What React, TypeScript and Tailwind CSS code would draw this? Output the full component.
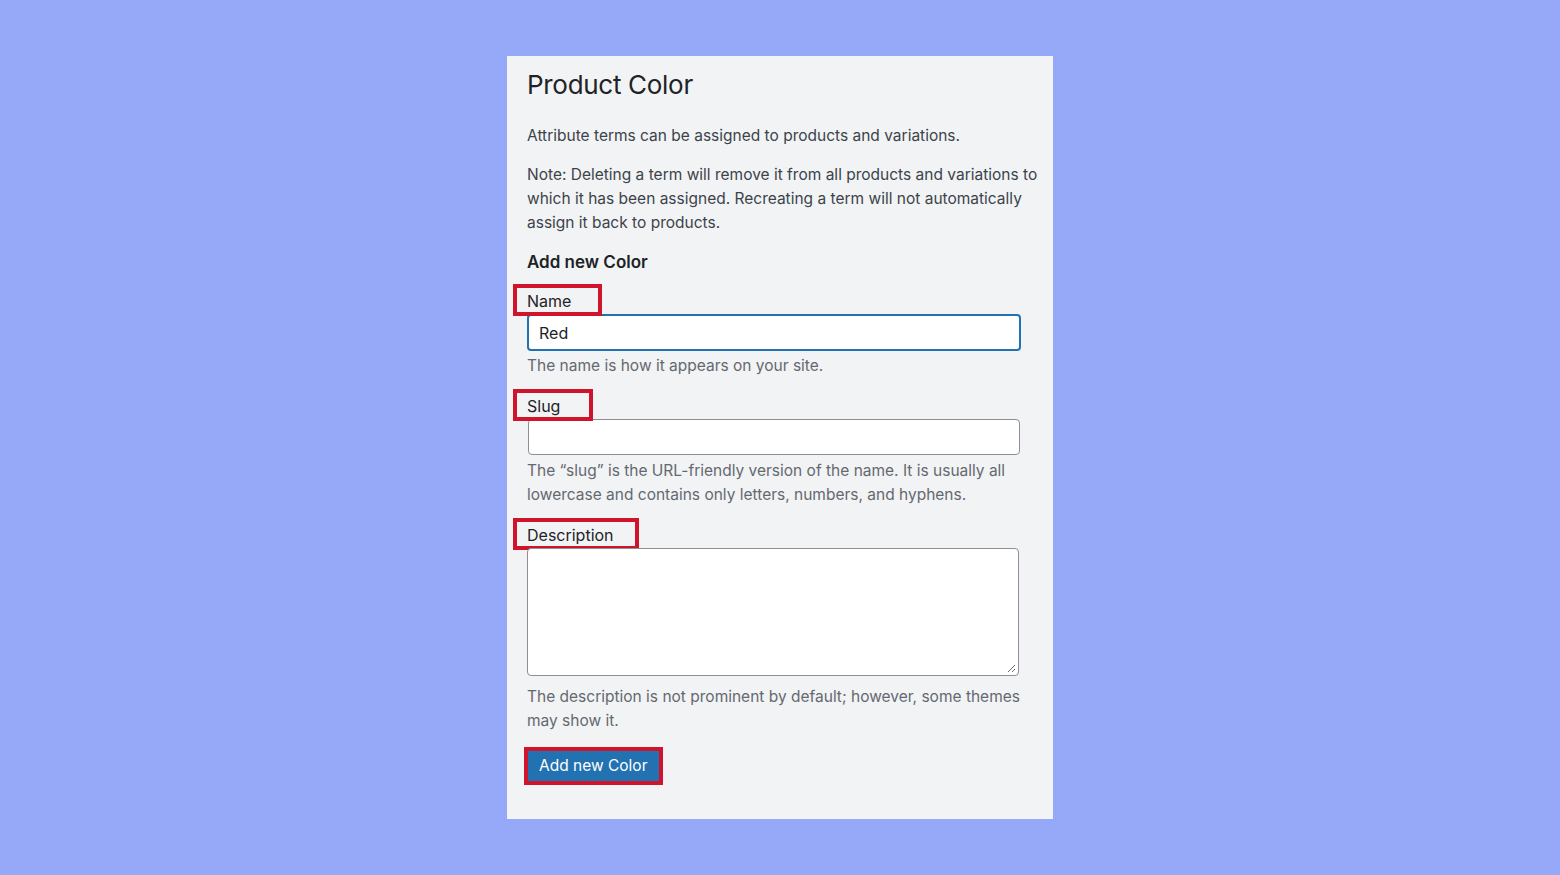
import React from "react";

const font = { fontFamily: 'Inter, "Noto Sans", "Liberation Sans", sans-serif' };

function MarkedLabel({ text, boxWidth }: { text: string; boxWidth: string }) {
  return (
    <div className="relative h-6 leading-6 text-[16px] text-[#1d2327]">
      <span className="relative z-10">{text}</span>
      <div className={`absolute left-[-14px] top-[-5px] h-[32px] border-4 border-[#d0142c] ${boxWidth}`} />
    </div>
  );
}

export default function App() {
  return (
    <div className="w-[1560px] h-[875px] bg-[#96a9f8] flex justify-center pt-[56px]" style={font}>
      <div className="w-[546px] h-[763px] bg-[#f2f3f5] pl-[20px] pr-[14px] pt-[13px]">
        <h1 className="text-[26px] leading-[32px] text-[#1d2327] font-normal tracking-[-0.3px]">Product Color</h1>
        <p className="mt-[23px] text-[15.5px] leading-6 text-[#3c434a]">
          Attribute terms can be assigned to products and variations.
        </p>
        <p className="mt-[15px] text-[15.5px] leading-6 text-[#3c434a]">
          Note: Deleting a term will remove it from all products and variations to which it has been assigned. Recreating a term will not automatically assign it back to products.
        </p>
        <h2 className="mt-[15px] text-[17px] leading-6 font-semibold text-[#1d2327]">Add new Color</h2>

        <div className="mt-[15px]">
          <MarkedLabel text="Name" boxWidth="w-[89px]" />
          <div className="mt-px w-[494px] h-[37px] rounded-[4px] border-2 border-[#2271b1] bg-white flex items-center pl-[10px] text-[16px] text-[#1d2327]">
            Red
          </div>
          <p className="mt-[3px] text-[15.5px] leading-6 text-[#646970]">The name is how it appears on your site.</p>
        </div>

        <div className="mt-[16px]">
          <MarkedLabel text="Slug" boxWidth="w-[80px]" />
          <div className="mt-px ml-px w-[492px] h-[36px] rounded-[4px] border border-[#8c8f94] bg-white" />
          <p className="mt-[4px] text-[15.5px] leading-6 text-[#646970]">
            The “slug” is the URL-friendly version of the name. It is usually all lowercase and contains only letters, numbers, and hyphens.
          </p>
        </div>

        <div className="mt-[16px]">
          <MarkedLabel text="Description" boxWidth="w-[126px]" />
          <div className="relative mt-px w-[492px] h-[128px] rounded-[4px] border border-[#8c8f94] bg-white">
            <svg className="absolute right-[2px] bottom-[2px]" width="9" height="9" viewBox="0 0 9 9">
              <line x1="1" y1="8" x2="8" y2="1" stroke="#6b6b6b" strokeWidth="1" />
              <line x1="5" y1="8" x2="8" y2="5" stroke="#6b6b6b" strokeWidth="1" />
            </svg>
          </div>
          <p className="mt-[9px] text-[15.5px] leading-6 text-[#646970]">
            The description is not prominent by default; however, some themes may show it.
          </p>
        </div>

        <div className="mt-[18px] ml-[1px]">
          <button className="h-[30px] px-[11px] bg-[#2271b1] text-white text-[15.5px] leading-[30px] outline-4 outline-[#d0142c]">
            Add new Color
          </button>
        </div>
      </div>
    </div>
  );
}
